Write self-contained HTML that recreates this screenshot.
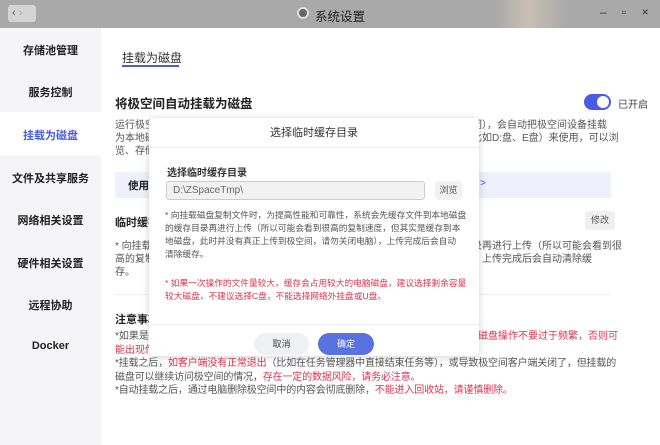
<!DOCTYPE html><html><head><meta charset="utf-8"><style>
*{margin:0;padding:0;box-sizing:border-box}
body{width:660px;height:445px;overflow:hidden;background:#fff;font-family:"Liberation Sans","Noto Sans CJK SC",sans-serif;position:relative;color:#333}
.a{position:absolute;white-space:nowrap}
.tb{position:absolute;left:0;top:0;width:660px;height:28px;background:linear-gradient(90deg,#a9a9a9 0%,#a9a9a9 75%,#c9c0b4 80%,#a9a9a9 86%)}
.side{position:absolute;left:0;top:28px;width:101px;height:417px;background:#f5f5f7}
.si{position:absolute;left:0;width:101px;text-align:center;font-size:11px;font-weight:bold;color:#222}
.t{font-size:10px;color:#555;line-height:13px}
.r{color:#e0334f}
</style></head><body>
<div class="tb"></div>
<div class="a" style="left:8px;top:5px;width:28px;height:17px;background:#d4d4d4;border-radius:3px;font-size:11px;color:#666;padding-left:4px;line-height:17px">‹ <span style="color:#aaa">›</span></div>
<div class="a" style="left:297px;top:7px;width:12px;height:12px;border-radius:50%;background:#666;border:2px solid #ddd"></div>
<div class="a" style="left:315px;top:6px;font-size:12.5px;color:#222">系统设置</div>
<div class="a" style="left:600px;top:5px;font-size:12px;color:#333;letter-spacing:6px">– ▫ ×</div>
<div class="side"></div>
<div class="a" style="left:0;top:112px;width:101px;height:43px;background:#fff"></div>
<div class="si" style="top:42px">存储池管理</div>
<div class="si" style="top:84px">服务控制</div>
<div class="si" style="top:127px;color:#4a5be6">挂载为磁盘</div>
<div class="si" style="top:170px">文件及共享服务</div>
<div class="si" style="top:212px">网络相关设置</div>
<div class="si" style="top:255px">硬件相关设置</div>
<div class="si" style="top:297px">远程协助</div>
<div class="si" style="top:340px">Docker</div>
<div class="a" style="left:122px;top:49px;font-size:12px;color:#333">挂载为磁盘</div>
<div class="a" style="left:122px;top:65px;width:57px;height:2px;background:#4a5be6"></div>
<div class="a" style="left:115px;top:93px;font-size:12.5px;font-weight:bold;color:#222">将极空间自动挂载为磁盘</div>
<div class="a" style="left:584px;top:94px;width:27px;height:16px;border-radius:8px;background:#4a5be6"></div>
<div class="a" style="left:597px;top:96px;width:12px;height:12px;border-radius:50%;background:#fff"></div>
<div class="a" style="left:618px;top:96px;font-size:10px;color:#444">已开启</div>
<div class="a t" style="left:115px;top:119px">运行极空<br>为本地磁<br>览、存储</div>
<div class="a t" style="left:472px;top:119px">闭），会自动把极空间设备挂载<br>比如D:盘、E盘）来使用，可以浏</div>
<div class="a" style="left:115px;top:172px;width:396px;height:26px;background:#eef0fb"></div>
<div class="a" style="left:480px;top:172px;width:131px;height:26px;background:#eef0fb"></div>
<div class="a" style="left:128px;top:178px;font-size:10.5px;font-weight:bold;color:#222">使用此</div>
<div class="a" style="left:480px;top:178px;font-size:10px;color:#4a5be6">&gt;</div>
<div class="a" style="left:115px;top:214px;font-size:11px;font-weight:bold;color:#222">临时缓存</div>
<div class="a" style="left:585px;top:211px;width:30px;height:19px;background:#f0f0f0;border-radius:3px;font-size:9px;color:#555;text-align:center;line-height:19px">修改</div>
<div class="a t" style="left:115px;top:240px">* 向挂载<br>高的复制<br>存。</div>
<div class="a t" style="left:472px;top:240px">录再进行上传（所以可能会看到很<br>，上传完成后会自动清除缓</div>
<div class="a" style="left:115px;top:294px;width:496px;height:1px;background:#eee"></div>
<div class="a" style="left:115px;top:311px;font-size:11px;font-weight:bold;color:#222">注意事项</div>
<div class="a t" style="left:115px;top:330px;line-height:13.7px">*如果是<br><span class="r">能出现传</span></div>
<div class="a t r" style="left:478px;top:330px">磁盘操作不要过于频繁，否则可</div>
<div class="a t" style="left:115px;top:357px;width:505px;white-space:normal;line-height:13.7px;letter-spacing:-0.15px">*挂载之后，<span class="r">如客户端没有正常退出</span>（比如在任务管理器中直接结束任务等），或导致极空间客户端关闭了，但挂载的磁盘可以继续访问极空间的情况，<span class="r">存在一定的数据风险，请务必注意。</span><br>*自动挂载之后，通过电脑删除极空间中的内容会彻底删除，<span class="r">不能进入回收站，请谨慎删除。</span></div>
<div class="a" style="left:149px;top:118px;width:330px;height:238px;background:#fff;border-radius:4px;box-shadow:0 1px 8px rgba(0,0,0,.18)"></div>
<div class="a" style="left:149px;top:147px;width:330px;height:1px;background:#eee"></div>
<div class="a" style="left:149px;top:124px;width:330px;text-align:center;font-size:11px;color:#333">选择临时缓存目录</div>
<div class="a" style="left:167px;top:164px;font-size:10px;font-weight:bold;color:#333">选择临时缓存目录</div>
<div class="a" style="left:166px;top:181px;width:259px;height:19px;background:#f2f2f2;border:1px solid #ccc;border-radius:3px;font-size:10px;color:#666;padding-left:6px;line-height:17px">D:\ZSpaceTmp\</div>
<div class="a" style="left:435px;top:181px;width:27px;height:19px;background:#f2f2f2;border-radius:3px;font-size:9px;color:#555;text-align:center;line-height:19px">浏览</div>
<div class="a t" style="left:165px;top:209px;font-size:8.7px">* 向挂载磁盘复制文件时，为提高性能和可靠性，系统会先缓存文件到本地磁盘<br>的缓存目录再进行上传（所以可能会看到很高的复制速度，但其实是缓存到本<br>地磁盘，此时并没有真正上传到极空间，请勿关闭电脑），上传完成后会自动<br>清除缓存。</div>
<div class="a t r" style="left:165px;top:277px;font-size:8.7px">* 如果一次操作的文件量较大，缓存会占用较大的电脑磁盘，建议选择剩余容量<br>较大磁盘，不建议选择C盘，不能选择网络外挂盘或U盘。</div>
<div class="a" style="left:149px;top:324px;width:330px;height:1px;background:#f0f0f0"></div>
<div class="a" style="left:254px;top:333px;width:55px;height:22px;border-radius:11px;background:#eef0f3;font-size:9px;color:#444;text-align:center;line-height:22px">取消</div>
<div class="a" style="left:318px;top:333px;width:56px;height:22px;border-radius:11px;background:#5a71e0;font-size:9px;color:#fff;text-align:center;line-height:22px">确定</div>
</body></html>
